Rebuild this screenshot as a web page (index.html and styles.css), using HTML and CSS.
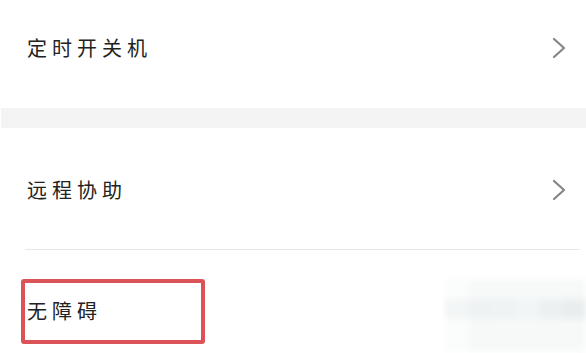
FILE: index.html
```html
<!DOCTYPE html>
<html lang="zh-CN">
<head>
<meta charset="utf-8">
<link rel="stylesheet" href="styles.css">
</head>
<body>
<div class="page">
  <div class="row row-first">
    <span class="label">定时开关机</span>
    <svg class="chev" width="14" height="22" viewBox="0 0 14 22"><path d="M2 2 L12 11 L2 20" fill="none" stroke="#858585" stroke-width="2.2" stroke-linecap="round" stroke-linejoin="round"/></svg>
  </div>
  <div class="band"></div>
  <div class="row row-second">
    <span class="label">远程协助</span>
    <svg class="chev" width="14" height="22" viewBox="0 0 14 22"><path d="M2 2 L12 11 L2 20" fill="none" stroke="#858585" stroke-width="2.2" stroke-linecap="round" stroke-linejoin="round"/></svg>
  </div>
  <div class="row row-third">
    <span class="label">无障碍</span>
    <div class="highlight"></div>
    <div class="blur">
      <div class="blk b1"></div><div class="blk b2"></div><div class="blk b3"></div><div class="blk b4"></div><div class="blk b5"></div><div class="blk b6"></div>
      <div class="blk c1"></div><div class="blk c2"></div><div class="blk c3"></div><div class="blk c4"></div><div class="blk c5"></div><div class="blk c6"></div>
      <div class="blk d1"></div><div class="blk d2"></div><div class="blk d3"></div><div class="blk d4"></div><div class="blk d5"></div><div class="blk d6"></div>
    </div>
  </div>
</div>
</body>
</html>
```
FILE: styles.css
```css
html, body {
  margin: 0;
  padding: 0;
  background: #ffffff;
}
.page {
  width: 586px;
  height: 353px;
  overflow: hidden;
  font-family: "Noto Sans CJK SC", "Noto Sans", sans-serif;
  color: #222222;
}
.row {
  display: flex;
  align-items: center;
  justify-content: space-between;
  padding: 0 20px 0 27px;
  box-sizing: border-box;
}
.label {
  font-size: 20px;
  letter-spacing: 5px;
  line-height: 20px;
}
.chev {
  display: block;
}
.row-first {
  height: 108px;
  padding-bottom: 12px;
}
.band {
  height: 20px;
  margin-left: 1px;
  background: #f4f4f4;
}
.row-second {
  height: 122px;
  padding-top: 2px;
  margin-left: 25px;
  padding-left: 2px;
  margin-right: 6px;
  padding-right: 14px;
  border-bottom: 1px solid #e8e8e8;
}
.row-third {
  position: relative;
  height: 102px;
  padding-top: 20px;
  align-items: center;
}
.highlight {
  position: absolute;
  left: 21px;
  top: 29px;
  width: 184px;
  height: 65px;
  box-sizing: border-box;
  border: 4px solid #dc5357;
  border-radius: 3px;
}
.blur {
  position: absolute;
  left: 445px;
  top: 29px;
  width: 141px;
  height: 73px;
  display: grid;
  grid-template-columns: repeat(6, 1fr);
  grid-template-rows: 20px 20px 33px;
  filter: blur(3px);
}
.b1, .b2, .b3, .b4, .b5, .b6 { background: #f7f9f9; }
.b1 { background: #fbfcfc; }
.c1 { background: #f3f6f6; }
.c2 { background: #eef2f2; }
.c3 { background: #eff3f3; }
.c4 { background: #f2f5f5; }
.c5 { background: #ecf0f0; }
.c6 { background: #e8eded; }
.d1, .d2, .d3, .d4, .d5, .d6 { background: #f7f9f9; }
.d1 { background: #fbfcfc; }
```
